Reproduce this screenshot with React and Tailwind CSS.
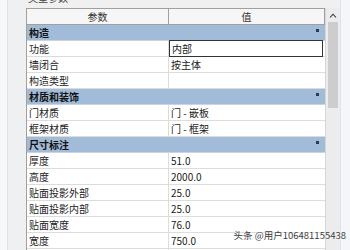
import React from "react";

const rows = [
  { cat: "构造" },
  { k: "功能", v: "内部", sel: true },
  { k: "墙闭合", v: "按主体" },
  { k: "构造类型", v: "" },
  { cat: "材质和装饰" },
  { k: "门材质", v: "门 - 嵌板" },
  { k: "框架材质", v: "门 - 框架" },
  { cat: "尺寸标注" },
  { k: "厚度", v: "51.0" },
  { k: "高度", v: "2000.0" },
  { k: "贴面投影外部", v: "25.0" },
  { k: "贴面投影内部", v: "25.0" },
  { k: "贴面宽度", v: "76.0" },
  { k: "宽度", v: "750.0" },
  { k: "粗略宽度", v: "" },
];

export default function App() {
  return (
    <div
      className="w-[350px] h-[250px] overflow-hidden bg-[#f0f0f0] flex text-[10px] text-[#1a1a1a] relative"
      style={{ fontFamily: '"Noto Sans CJK SC", "Liberation Sans", sans-serif' }}
    >
      <div className="w-[26px] h-full flex shrink-0">
        <div className="w-[8px] h-full bg-[#f7f8fa] border-r border-[#dfe3e8]" />
        <div className="flex-1 h-full bg-[#eef0f2]" />
      </div>
      <div className="flex flex-col w-[314px] shrink-0">
        <div className="h-[8px] relative overflow-hidden">
          <div className="absolute left-[2px] top-[-8px] text-[#444] leading-[12px] whitespace-nowrap">类型参数</div>
        </div>
        <div className="flex flex-1 min-h-0">
          <div className="w-[299px] flex flex-col border-l border-[#a0a0a0] bg-white">
            <div className="flex h-[17px] border-t border-b border-[#a0a0a0] bg-[#f6f6f6] text-[#333] shrink-0">
              <div className="w-[142px] flex items-center justify-center border-r border-[#a0a0a0]">参数</div>
              <div className="flex-1 flex items-center justify-center border-r border-[#a0a0a0]">值</div>
            </div>
            {rows.map((r, i) =>
              r.cat ? (
                <div key={i} className="h-[16px] flex items-center bg-[#a2bbd8] border-b border-[#c8d4e2] px-[2px] font-bold text-[#111] shrink-0">
                  <span className="flex-1">{r.cat}</span>
                  <span className="w-[3px] h-[3px] bg-[#2a3a55] mr-[4px] mb-[4px]" />
                </div>
              ) : (
                <div key={i} className="h-[16px] flex border-b border-[#dcdcdc] shrink-0">
                  <div className="w-[142px] flex items-center px-[2px] border-r border-[#dcdcdc] text-[#222] whitespace-nowrap">{r.k}</div>
                  <div
                    className={
                      r.sel
                        ? "flex-1 flex items-center px-[2px] border border-[#333] mr-[2px] -my-px"
                        : "flex-1 flex items-center px-[2px]"
                    }
                  >
                    {r.v}
                  </div>
                </div>
              )
            )}
          </div>
          <div className="w-[15px] flex flex-col bg-[#ececec] border-l border-[#d6d6d6]">
            <div className="h-[14px] flex items-center justify-center">
              <svg width="8" height="5" viewBox="0 0 8 5">
                <path d="M1 4.5 L4 1.2 L7 4.5" fill="none" stroke="#333" strokeWidth="1.1" />
              </svg>
            </div>
            <div className="mx-[2px] h-[86px] bg-[#cdcdcd]" />
          </div>
        </div>
      </div>
      <div className="flex-1 h-full bg-[#f4f6f9] border-l border-[#e0e4ea]" />
      <div
        className="absolute right-[4px] top-[229px] text-[9.5px] text-[#3b3b3b] leading-[13px] whitespace-nowrap"
        style={{ textShadow: "0 0 2px #fff, 0 0 2px #fff" }}
      >
        头条 @用户106481155438
      </div>
    </div>
  );
}
